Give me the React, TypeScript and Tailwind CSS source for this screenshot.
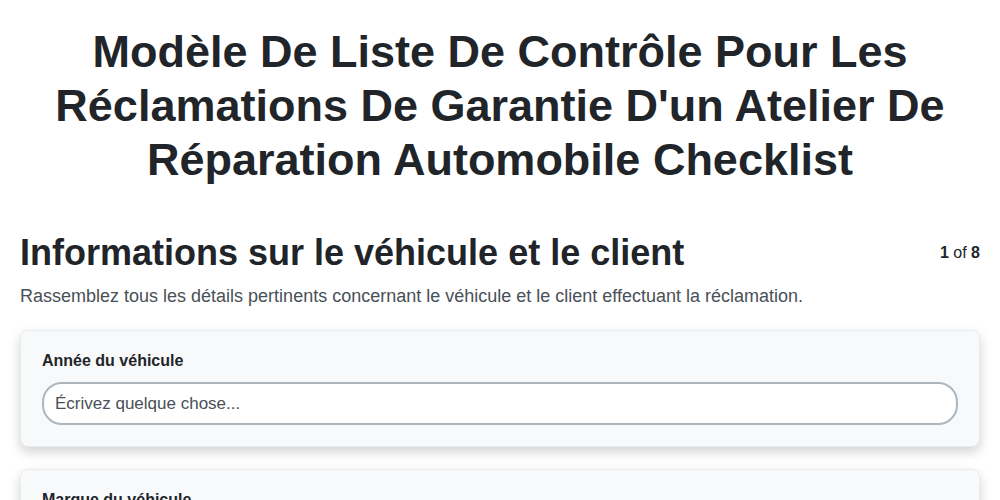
import React from "react";

function Field({ label }: { label: string }) {
  return (
    <div className="rounded-lg border border-[#e9ecef] bg-[#f8f9fa] px-[21px] pt-[20px] pb-[21px] shadow-[0_5px_12px_rgba(0,0,0,0.18)]">
      <div className="text-[16px] font-bold leading-[20px] text-[#212529]">{label}</div>
      <input
        type="text"
        placeholder="Écrivez quelque chose..."
        className="mt-[11px] block h-[43px] w-full rounded-[20px] border-2 border-[#adb5bd] bg-white px-[11px] text-[17px] text-[#212529] placeholder:text-[#495057] outline-none"
      />
    </div>
  );
}

export default function App() {
  return (
    <div className="min-h-screen bg-white px-[20px] text-[#212529]" style={{ fontFamily: '"Liberation Sans", Arial, sans-serif' }}>
      <h1 className="pt-[25px] text-center text-[45px] font-bold leading-[54px]">
        Modèle De Liste De Contrôle Pour Les Réclamations De Garantie D'un Atelier De Réparation Automobile Checklist
      </h1>
      <div className="mt-[44px] flex items-center justify-between">
        <h2 className="text-[36px] font-bold leading-[44px]">Informations sur le véhicule et le client</h2>
        <div className="text-[16px]"><span className="font-bold">1</span> of <span className="font-bold">8</span></div>
      </div>
      <p className="mt-[8px] text-[18px] leading-[27px] text-[#495057]">
        Rassemblez tous les détails pertinents concernant le véhicule et le client effectuant la réclamation.
      </p>
      <div className="mt-[20px] flex flex-col gap-[22px] pb-[40px]">
        <Field label="Année du véhicule" />
        <Field label="Marque du véhicule" />
        <Field label="Modèle du véhicule" />
      </div>
    </div>
  );
}
